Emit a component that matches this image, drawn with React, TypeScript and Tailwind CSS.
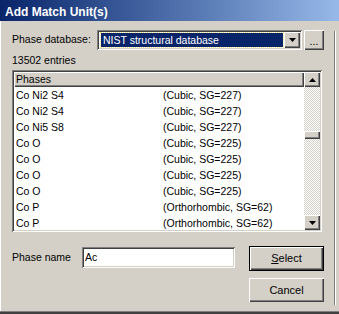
import React from 'react';

const raised = 'shadow-[inset_1px_1px_#ffffff,inset_-1px_-1px_#404040,inset_-2px_-2px_#808080]';
const sunken = 'shadow-[inset_1px_1px_#808080,inset_-1px_-1px_#ffffff,inset_2px_2px_#404040,inset_-2px_-2px_#d4d0c8]';

const ROWS: [string, string][] = [
  ['Co Ni2 S4', '(Cubic, SG=227)'],
  ['Co Ni2 S4', '(Cubic, SG=227)'],
  ['Co Ni5 S8', '(Cubic, SG=227)'],
  ['Co O', '(Cubic, SG=225)'],
  ['Co O', '(Cubic, SG=225)'],
  ['Co O', '(Cubic, SG=225)'],
  ['Co O', '(Cubic, SG=225)'],
  ['Co P', '(Orthorhombic, SG=62)'],
  ['Co P', '(Orthorhombic, SG=62)'],
];

function Arrow({ up }: { up?: boolean }) {
  return (
    <svg width="7" height="4" viewBox="0 0 7 4">
      {up ? <polygon points="3.5,0 7,4 0,4" fill="#000" /> : <polygon points="0,0 7,0 3.5,4" fill="#000" />}
    </svg>
  );
}

export default function App() {
  return (
    <div className="w-[339px] h-[314px] bg-[#d4d0c8] flex flex-col overflow-hidden text-black font-['Liberation_Sans',Arial,sans-serif] text-[10.5px]">
      {/* Title bar */}
      <div className="h-[21px] shrink-0 flex items-center pl-[5px] pt-[2px] bg-gradient-to-r from-[#0a246a] to-[#97b9e9] text-white font-bold text-[12px]">
        Add Match Unit(s)
      </div>

      <div className="flex flex-1 border-l border-white">
        {/* Content */}
        <div className="w-[333px] pl-[11px] flex flex-col">
          {/* Database row */}
          <div className="flex items-center mt-[9px] h-[20px]">
            <span className="w-[85px]">Phase database:</span>
            <div className={`w-[205px] h-[20px] bg-white flex items-center pl-[4px] pr-[2px] ${sunken}`}>
              <div className="flex-1 h-[14px] bg-[#0a246a] text-white flex items-center pl-[2px] outline outline-1 outline-dotted outline-[#f0e68c] leading-none">
                NIST structural database
              </div>
              <div className={`w-[16px] h-[16px] ml-[1px] bg-[#d4d0c8] flex items-center justify-center ${raised}`}>
                <Arrow />
              </div>
            </div>
            <div className={`w-[20px] h-[20px] ml-[2px] flex items-end justify-center pb-[4px] leading-none ${raised}`}>
              ...
            </div>
          </div>

          <div className="mt-[4px] h-[13px] leading-[13px]">13502 entries</div>

          {/* List */}
          <div className={`mt-[3px] w-[310px] h-[162px] bg-white p-[2px] flex ${sunken}`}>
            <div className="flex-1 flex flex-col overflow-hidden">
              <div className={`h-[15px] shrink-0 bg-[#d4d0c8] pl-[2px] leading-[14px] ${raised}`}>Phases</div>
              {ROWS.map((r, i) => (
                <div key={i} className="h-[16px] shrink-0 flex items-center leading-none">
                  <span className="w-[149px] pl-[2px]">{r[0]}</span>
                  <span>{r[1]}</span>
                </div>
              ))}
            </div>
            <div className="w-[16px] flex flex-col bg-[repeating-conic-gradient(#ffffff_0_25%,#d4d0c8_0_50%)] bg-[length:2px_2px]">
              <div className={`h-[15px] shrink-0 bg-[#d4d0c8] flex items-center justify-center ${raised}`}>
                <Arrow up />
              </div>
              <div className="h-[44px] shrink-0" />
              <div className={`h-[8px] shrink-0 bg-[#d4d0c8] ${raised}`} />
              <div className="flex-1" />
              <div className={`h-[15px] shrink-0 bg-[#d4d0c8] flex items-center justify-center ${raised}`}>
                <Arrow />
              </div>
            </div>
          </div>

          {/* Bottom row */}
          <div className="flex mt-[14px]">
            <div className="flex items-center h-[21px] mt-[1px]">
              <span className="w-[70px]">Phase name</span>
              <div className={`w-[153px] h-[21px] bg-white flex items-center pl-[3px] ${sunken}`}>Ac</div>
            </div>
            <div className="ml-[14px] flex flex-col gap-[7px]">
              <div className="w-[75px] h-[25px] border border-black">
                <div className={`w-full h-full flex items-center justify-center text-[11px] ${raised}`}>
                  <span><span className="underline">S</span>elect</span>
                </div>
              </div>
              <div className={`w-[75px] h-[24px] flex items-center justify-center text-[11px] ${raised}`}>Cancel</div>
            </div>
          </div>
        </div>

        {/* Right frame edge */}
        <div className="w-[1px] bg-[#808080] mt-[10px] mb-[6px]" />
        <div className="w-[1px] bg-white mt-[10px] mb-[6px]" />
      </div>

      <div className="h-[1px] shrink-0 bg-[#808080]" />
      <div className="h-[2px] shrink-0 bg-[#404040]" />
    </div>
  );
}
